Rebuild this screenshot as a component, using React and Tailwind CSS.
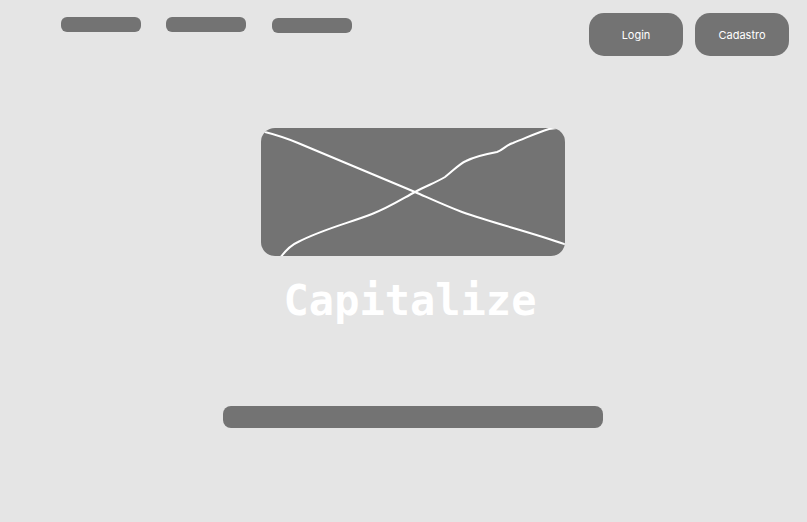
import React from 'react';

const Placeholder = () => (
  <div className="w-[304px] h-[128px] rounded-[14px] bg-[#737373] overflow-hidden">
    <svg width="304" height="128" viewBox="0 0 304 128" fill="none">
      <path
        d="M0 3 C12 6 25 10 37 15 C80 33 120 50 154 64 C170 71 185 78 201 84 C235 96 270 104 306 117"
        stroke="#fff"
        strokeWidth="2"
      />
      <path
        d="M19 130 C25 122 30 117 37 114 C62 101 88 95 111 86 C127 80 141 71 154 64 C165 58 176 54 184 49 C192 43 198 36 205 33 C215 28 225 26 236 24 C242 22 245 17 252 15 C265 10 275 5 288 1 L296 0"
        stroke="#fff"
        strokeWidth="2"
      />
    </svg>
  </div>
);

export default function App() {
  return (
    <div className="w-[807px] h-[522px] bg-[#e5e5e5] font-['Inter','Liberation_Sans',sans-serif]">
      <header className="flex justify-between items-start pl-[61px] pr-[18px] pt-[13px]">
        <nav className="flex gap-[25px] pt-[4px]">
          <div className="w-[80px] h-[15px] rounded-[6px] bg-[#737373]" />
          <div className="w-[80px] h-[15px] rounded-[6px] bg-[#737373]" />
          <div className="w-[80px] h-[15px] rounded-[6px] bg-[#737373] mt-px ml-px" />
        </nav>
        <div className="flex gap-[12px]">
          <button className="w-[94px] h-[43px] pt-[2px] rounded-[15px] bg-[#737373] text-white text-[11px]">
            Login
          </button>
          <button className="w-[94px] h-[43px] pt-[2px] rounded-[15px] bg-[#737373] text-white text-[11px]">
            Cadastro
          </button>
        </div>
      </header>

      <main className="flex flex-col items-center pl-[19px] pt-[72px]">
        <Placeholder />
        <h1 className="mt-[20px] text-[42px] leading-[50px] font-bold text-white font-['DejaVu_Sans_Mono','Liberation_Mono',monospace] mr-[6px]">
          Capitalize
        </h1>
        <div className="mt-[80px] w-[380px] h-[22px] rounded-[8px] bg-[#737373]" />
      </main>
    </div>
  );
}
